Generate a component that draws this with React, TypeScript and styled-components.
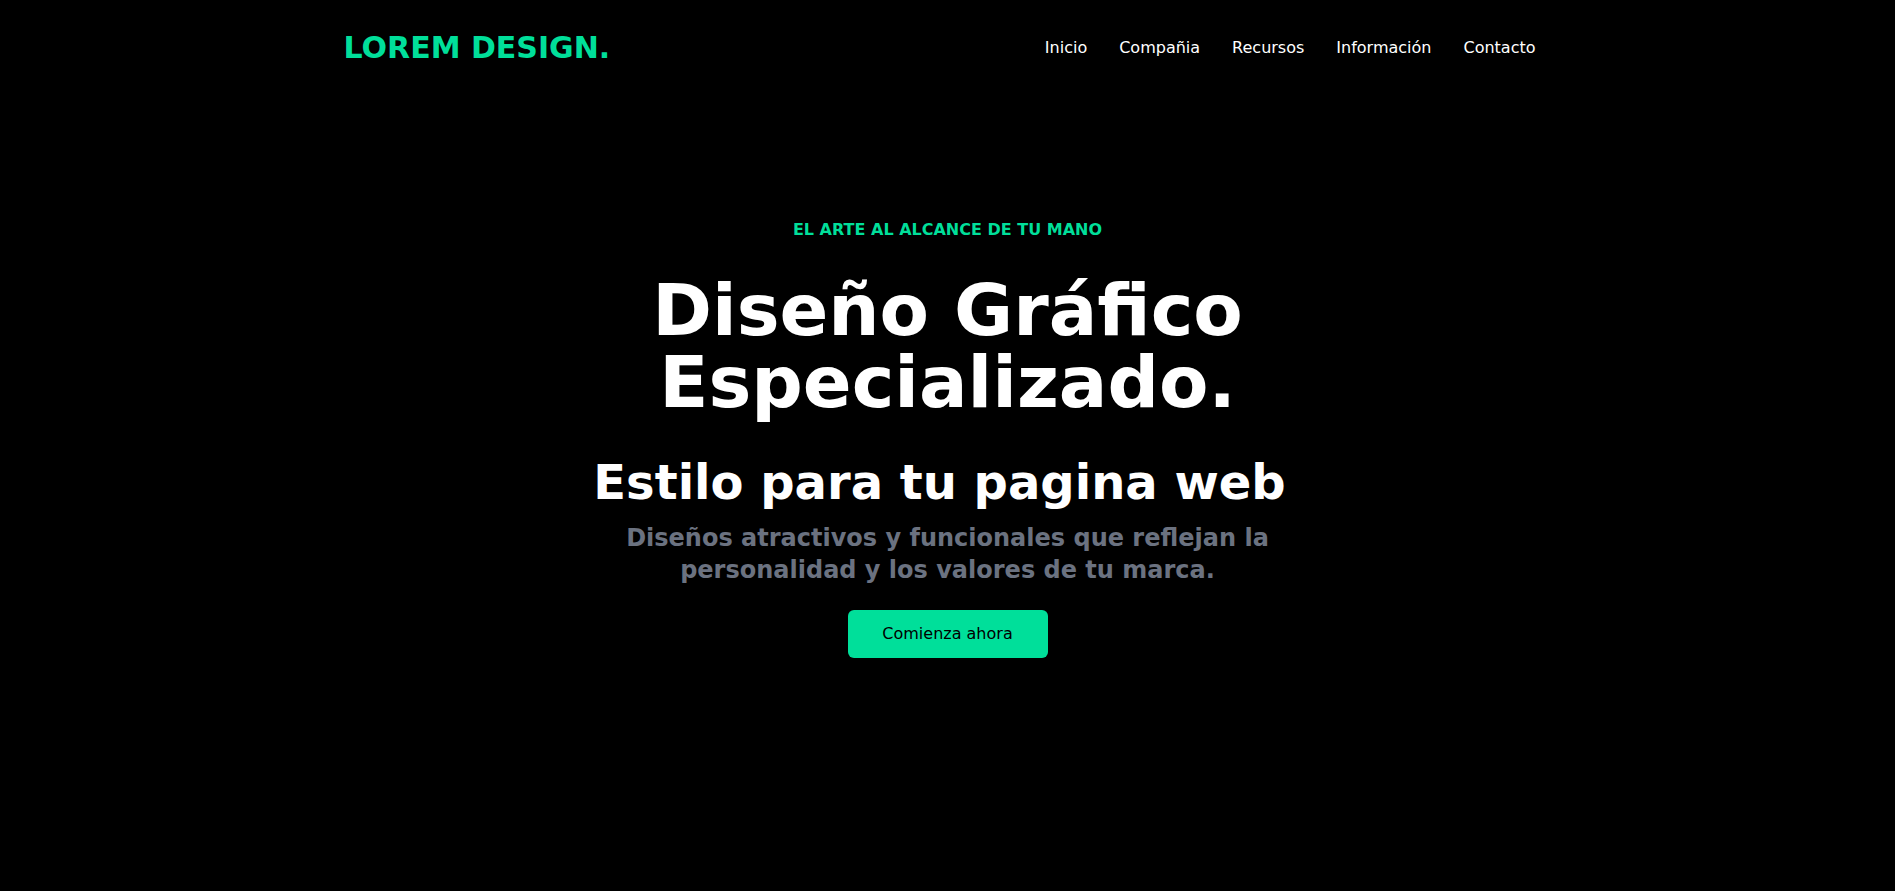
import React from 'react';
import styled, { createGlobalStyle } from 'styled-components';

const GlobalStyle = createGlobalStyle`
  *, *::before, *::after {
    box-sizing: border-box;
  }

  html, body {
    margin: 0;
    padding: 0;
    background: #000;
  }

  body {
    font-family: 'DejaVu Sans', 'Liberation Sans', sans-serif;
    color: #fff;
  }

  h1, h2, p, ul {
    margin: 0;
    padding: 0;
  }
`;

const Nav = styled.nav`
  display: flex;
  justify-content: space-between;
  align-items: center;
  height: 96px;
  max-width: 1240px;
  margin: 0 auto;
  padding: 0 16px;
  color: #fff;
  position: relative;
  z-index: 1;
`;

const Logo = styled.h1`
  width: 100%;
  font-size: 30px;
  line-height: 36px;
  font-weight: 700;
  color: #00df9a;
`;

const Menu = styled.ul`
  display: flex;
  list-style: none;
`;

const MenuItem = styled.li`
  padding: 16px;
  font-size: 16px;
  line-height: 24px;
  white-space: nowrap;
`;

const Hero = styled.section`
  max-width: 800px;
  width: 100%;
  height: 100vh;
  margin: -96px auto 0;
  text-align: center;
  display: flex;
  flex-direction: column;
  justify-content: center;
`;

const Tagline = styled.p`
  color: #00df9a;
  font-weight: 700;
  font-size: 16px;
  line-height: 24px;
  padding: 8px;
`;

const Headline = styled.h1`
  font-size: 72px;
  line-height: 1;
  font-weight: 700;
  padding: 24px 0;
`;

const Subline = styled.div`
  display: flex;
  justify-content: center;
  align-items: center;
`;

const SublineText = styled.p`
  font-size: 48px;
  line-height: 1;
  font-weight: 700;
  padding: 16px 0;
`;

// slot for the typed word that follows the subline; empty in this state
const Typed = styled.span`
  font-size: 48px;
  line-height: 1;
  font-weight: 700;
  padding-left: 16px;
`;

const Lead = styled.p`
  font-size: 24px;
  line-height: 32px;
  font-weight: 700;
  color: #6b7280;
`;

const Button = styled.button`
  display: block;
  width: 200px;
  margin: 24px auto;
  padding: 12px 0;
  border: none;
  border-radius: 6px;
  background: #00df9a;
  color: #000;
  font-family: inherit;
  font-size: 16px;
  line-height: 24px;
  font-weight: 500;
  cursor: pointer;
`;

const links = ['Inicio', 'Compañia', 'Recursos', 'Información', 'Contacto'];

export default function App() {
  return (
    <>
      <GlobalStyle />
      <Nav>
        <Logo>LOREM DESIGN.</Logo>
        <Menu>
          {links.map((label) => (
            <MenuItem key={label}>{label}</MenuItem>
          ))}
        </Menu>
      </Nav>
      <Hero>
        <Tagline>EL ARTE AL ALCANCE DE TU MANO</Tagline>
        <Headline>
          Diseño Gráfico
          <br />
          Especializado.
        </Headline>
        <Subline>
          <SublineText>Estilo para tu pagina web</SublineText>
          <Typed />
        </Subline>
        <Lead>
          Diseños atractivos y funcionales que reflejan la personalidad y los
          valores de tu marca.
        </Lead>
        <Button>Comienza ahora</Button>
      </Hero>
    </>
  );
}
